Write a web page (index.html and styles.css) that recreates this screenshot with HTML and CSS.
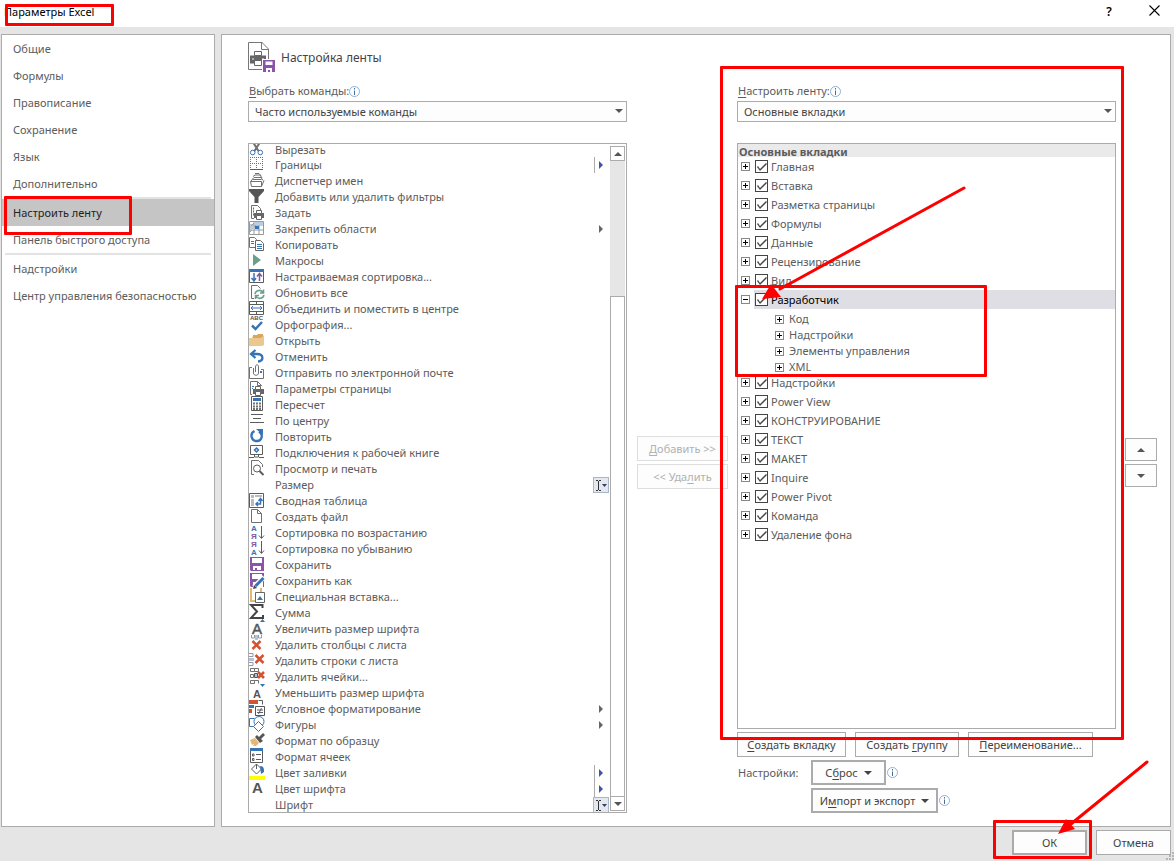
FILE: index.html
```html
<!DOCTYPE html>
<html lang="ru">
<head>
<meta charset="utf-8">
<title>Параметры Excel</title>
<link rel="stylesheet" href="styles.css">
</head>
<body>
<header class="titlebar">
  <h1 class="title">Параметры Excel<span class="mark mark-title"></span></h1>
  <button class="winbtn" type="button" aria-label="Справка">?</button>
  <button class="winbtn" type="button" aria-label="Закрыть"><svg width="11" height="11" viewBox="0 0 11 11"><path d="M.5 .5l10 10M10.5 .5l-10 10" stroke="#000" stroke-width="1.1"/></svg></button>
</header>

<div class="workspace">
  <nav class="sidebar">
    <a href="#">Общие</a>
    <a href="#">Формулы</a>
    <a href="#">Правописание</a>
    <a href="#">Сохранение</a>
    <a href="#">Язык</a>
    <a href="#">Дополнительно</a>
    <hr>
    <a href="#" class="current">Настроить ленту<span class="mark mark-nav"></span></a>
    <a href="#">Панель быстрого доступа</a>
    <hr>
    <a href="#">Надстройки</a>
    <a href="#">Центр управления безопасностью</a>
  </nav>

  <main class="panel">
    <div class="heading">
      <svg width="28" height="31" viewBox="0 0 28 31" fill="none">
        <path d="M14.500 .5H.5v27h14M14 .5l6.500 6.500V17M13.500 .5v7h7" stroke="#777"/>
        <path d="M2 13.500h16v8H2z" fill="#666"/><path d="M4 17h2M14 17h2" stroke="#fff"/>
        <path d="M6.500 9.500h7v4h-7zM6.500 18.500h7v5h-7z" fill="#fff" stroke="#666"/>
        <path d="M14 17h14v14H14z" fill="#fff"/><path d="M15 18h12v12H15z" fill="#8a55a8"/><path d="M17.500 19.500h7v3.500h-7zM18 26h6v4h-6z" fill="#fff"/><path d="M20 28h2v2h-2z" fill="#8a55a8"/>
      </svg>
      <h2>Настройка ленты</h2>
    </div>

    <div class="columns">
      <section class="column">
        <div class="caption"><label for="from"><u>В</u>ыбрать команды:</label><svg class="info" viewBox="0 0 11 11"><circle cx="5.500" cy="5.500" r="5"/><path d="M5 2h1v1.500H5zM5 4.500h1V9H5z"/></svg></div>
        <div class="combo"><select id="from"><option>Часто используемые команды</option></select></div>
        <div class="listbox">
          <ul class="commands">
            <li><svg class="ico"><path class="g" d="M4.500 2l5 8M10.500 2l-5 8" stroke-width="2"/><circle class="b" cx="3.700" cy="11.500" r="2.300"/><circle class="b" cx="11.300" cy="11.500" r="2.300"/></svg>Вырезать</li>
            <li><svg class="ico"><path class="g" stroke-dasharray="1 1" d="M1 .5h14M1 6.500h14M1.500 0v13M7.500 0v13M13.500 0v13"/><path class="d" d="M1 12.500h13"/></svg>Границы<span class="fly split"></span></li>
            <li><svg class="ico"><path class="g" d="M1.500 8.500h11v5H2.500zM12.500 13.500l2.500-6M3 6.500l2-2h7l2 3M4 3.500l2-1.500h5l2 3M6 .5h4l2 2M1.500 8.500l2-2h9"/></svg>Диспетчер имен</li>
            <li><svg class="ico"><path fill="#555" d="M0 0h15v2L9.500 8v6h-4V8L0 2z"/></svg>Добавить или удалить фильтры</li>
            <li><svg class="ico"><path class="g" d="M5 13.500H2.500V.5h6l3 3v2"/><path class="b" d="M4.500 2.500v8" stroke-dasharray="2 1"/><path fill="#666" d="M5 8h10v5H5z"/><path d="M7.500 5.500h5v3h-5zM7.500 10.500h5v4h-5z" fill="#fff" stroke="#666"/></svg>Задать</li>
            <li><svg class="ico"><path class="l" d="M.5 .5h14v13H.5zM.5 4h14M.5 9h14M5 .5v13M10 .5v13M0 7l7-7M0 12L10 1"/><path fill="#b9cde5" d="M1 5h4v4H1zM5 1h9v3H5z"/><path fill="#3674b5" d="M6 5h4v3H6z"/></svg>Закрепить области<span class="fly plain"></span></li>
            <li><svg class="ico"><path fill="#fff" stroke="#707070" d="M.5 .5h5l2 2v8h-7z"/><path d="M6.500 3.500h5l3 3v7h-8z" fill="#fff" stroke="#666"/><path class="b" d="M2 4.500h3M2 6.500h3M8 7.500h5M8 9.500h5M8 11.500h5"/></svg>Копировать</li>
            <li><svg class="ico"><path fill="#6b9f8b" d="M4 1L12 7l-8 6z"/></svg>Макросы</li>
            <li><svg class="ico"><path class="d" d="M.5 .5h14v13H.5z"/><path fill="#3674b5" d="M0 0h15v3H0z"/><path class="b" stroke-width="1.500" d="M5 4v8M2.500 9L5 12l2-3"/><path stroke="#7e57a5" stroke-width="1.500" fill="none" d="M10.500 12V4.500M8 7.500l2.500-3 2.500 3"/></svg>Настраиваемая сортировка...</li>
            <li><svg class="ico"><path class="g" d="M5 13.500H2.500V.5h6l3 3"/><path fill="none" stroke="#6b9f8b" stroke-width="1.600" d="M6 9c.5-4 6-5 8-1.500M14.500 4.500v3.500h-3.500M15 10c-1 4-6.500 4.500-8 1M6.500 14v-3.500H10"/></svg>Обновить все</li>
            <li><svg class="ico"><path class="d" d="M.5 .5h14v13H.5zM.5 3.500h14M.5 10.500h14M7.500 .5v3M7.500 10.500v3"/><path class="b" d="M2 7h11M4 5L2 7l2 2M11 5l2 2-2 2"/></svg>Объединить и поместить в центре</li>
            <li><svg class="ico"><text x="1" y="3" class="tiny">ABC</text><path class="b" stroke-width="2.500" d="M3 8.500L6.500 12 13 5"/></svg>Орфография...</li>
            <li><svg class="ico"><path fill="#d9a75c" d="M4 2h4l1-1h5v11H2z"/><path fill="#ebc88d" d="M0 5h12l3-3v10l-2 1H0z"/></svg>Открыть</li>
            <li><svg class="ico"><path class="b" stroke-width="2.300" d="M6.500 1L2 5l4.500 4M2 5h6c7 0 7 7 1 7.500"/></svg>Отменить</li>
            <li><svg class="ico"><path class="g" d="M3 2.500H.5v11h14v-9H12"/><path class="g" d="M4.500 3v5c0 3 5 3 5 0V2c0-3-3-3-3 0v5"/><path fill="#3674b5" d="M11 6h2v2h-2z"/></svg>Отправить по электронной почте</li>
            <li><svg class="ico"><path class="g" d="M3 13.500H1.500V.5h7l4 4M8.500 .5v4h4"/><path fill="#666" d="M4 8h11v5H4z"/><path d="M6.500 5.500h5v3h-5zM6.500 10.500h5v4h-5z" fill="#fff" stroke="#666"/><path class="b" d="M3 5.500h2M3 7.500h1"/></svg>Параметры страницы</li>
            <li><svg class="ico"><path class="d" d="M2.500 -.5h11v14h-11z"/><path fill="#3674b5" d="M4 1h8v3H4z"/><path class="g" stroke-width="2" stroke-dasharray="2 1" d="M4 6.500h8M4 9.500h8M4 12h8"/></svg>Пересчет</li>
            <li><svg class="ico"><path class="d" d="M2 1.500h12M4 5.500h8M1 9.500h14"/></svg>По центру</li>
            <li><svg class="ico"><path class="b" stroke-width="2.300" d="M10 2.500c5 3.500 2.500 9.500-2 9.500-6 0-7.500-7.500-2.500-10"/><path fill="#3674b5" d="M7 0h7v6z"/></svg>Повторить</li>
            <li><svg class="ico"><path class="d" d="M1.500 .5h12v9h-12zM0 12.500h5M10 12.500h5M5.500 10v2h4v-2"/><path class="b" stroke-width="1.500" d="M7.500 3l2 2-2 2-2-2z"/></svg>Подключения к рабочей книге</li>
            <li><svg class="ico"><path class="g" d="M5 13.500H2.500V-.5h7l4 4V6"/><circle class="d" cx="8" cy="7.500" r="3.500"/><path class="d" stroke-width="2" d="M10.500 10l4 4"/></svg>Просмотр и печать</li>
            <li><svg class="ico"></svg>Размер<span class="sizer"><svg width="14" height="14"><path d="M2 2.500h2M5 2.500h2M4.500 3v9M2 12.500h2M5 12.500h2" stroke="#333" fill="none"/><path d="M8 6h5l-2.500 3z" fill="#33415f"/></svg></span></li>
            <li><svg class="ico"><path class="d" d="M.5 .5h14v14H.5z"/><path fill="#bbb" d="M2 2h3v3H2zM6 2h7v2H6zM2 6h3v7H2z"/><path class="b" stroke-width="1.500" d="M7 11h4.500V6M9.500 8l2-2.500 2 2.500M9 9l-2 2 2 2"/></svg>Сводная таблица</li>
            <li><svg class="ico"><path class="g" d="M2.500 .5h6l4 4v9h-10zM8.500 .5v4h4"/></svg>Создать файл</li>
            <li><svg class="ico"><text x="2" y="6" class="az blue">А</text><text x="2" y="14" class="az violet">Я</text><path class="d" d="M12.500 1v12M10 10.500l2.500 3 2.500-3"/></svg>Сортировка по возрастанию</li>
            <li><svg class="ico"><text x="2" y="6" class="az violet">Я</text><text x="2" y="14" class="az blue">А</text><path class="d" d="M12.500 0v12M10 9.500l2.500 3 2.500-3"/></svg>Сортировка по убыванию</li>
            <li><svg class="ico"><path fill="#8a55a8" d="M1 0h14v14H2l-1-1z"/><path fill="#fff" d="M3 1h10v5H3zM4 9h8v4H4z"/><path fill="#8a55a8" d="M6 11h2v2H6z"/></svg>Сохранить</li>
            <li><svg class="ico"><path fill="#8a55a8" d="M1 0h14v14H2l-1-1z"/><path fill="#fff" d="M3 1h10v5H3zM4 9h10v5H4z"/><path stroke="#fff" stroke-width="5" d="M5 14L15 4"/><path stroke="#3674b5" stroke-width="3" d="M6.500 13l8-8"/><path fill="#444" d="M4 16l1-4 3 3z"/></svg>Сохранить как</li>
            <li><svg class="ico"><path fill="none" stroke="#e3b877" stroke-width="2" d="M2 -1v13h4M12-1v4"/><path d="M6.500 3.500h9v10h-9z" fill="#fff" stroke="#666"/><path fill="#3674b5" d="M8 11l3-4 3 4z"/></svg>Специальная вставка...</li>
            <li><svg class="ico"><path fill="none" stroke="#444" stroke-width="2" d="M13.500 3V0H2l6 6.500L2 13h12v-3"/></svg>Сумма</li>
            <li><svg class="ico"><text x="3" y="13" class="big thick">A</text><path fill="#3674b5" d="M11 1l2.500-3L16 1z"/></svg>Увеличить размер шрифта</li>
            <li><svg class="ico"><path class="l" d="M2.500-2v3h3v-3M12.500-2v3h-3v-3"/><path fill="#aac5e2" d="M6-2h3v5H6z"/><path class="r" d="M3.500 4l8 8M11.500 4l-8 8"/></svg>Удалить столбцы с листа</li>
            <li><svg class="ico"><path class="l" d="M0 .5h4v3H0M0 12.500h4v-3H0"/><path fill="#aac5e2" d="M0 5h5v3H0z"/><path class="r" d="M6.500 2l8 8M14.500 2l-8 8"/></svg>Удалить строки с листа</li>
            <li><svg class="ico"><path class="g" d="M1.500-.5h4v3h-4zM5.500-.5h4v3h-4M1.500 11.500h4v3h-4zM5.500 11.500h4v3M1.500 5.500h3v3h-3z"/><path d="M5.500 4.500h3v4h-3z" fill="#aac5e2" stroke="#555"/><path class="r" stroke-width="1.600" d="M9 3l6 6M15 3l-6 6"/></svg>Удалить ячейки...</li>
            <li><svg class="ico"><text x="4" y="13" class="mid">A</text><path fill="#3674b5" d="M11-1h5l-2.500 3z"/></svg>Уменьшить размер шрифта</li>
            <li><svg class="ico"><path fill="#d35230" d="M0-1h9v4H0z"/><path fill="#3674b5" d="M0 4h5v3H0z"/><path fill="#d35230" d="M0 8h3v4H0z"/><path class="d" d="M9.500-.5h4v4"/><path d="M6.500 5.500h9v9h-9z" fill="#fff" stroke="#555"/><path class="d" d="M8 9h6M8 11.500h6M12.500 7l-3 6"/></svg>Условное форматирование<span class="fly plain"></span></li>
            <li><svg class="ico"><path class="b" d="M4.500 9.500h-4v-8h5"/><circle class="b" cx="10" cy="4.500" r="5"/><path d="M9.500 4.500l5 5-5 5-5-5z" fill="#fff" stroke="#3674b5"/></svg>Фигуры<span class="fly plain"></span></li>
            <li><svg class="ico"><path fill="#e3b877" d="M1 7l5-2 4 5-3 3H4l1-2-2 1z"/><path fill="#555" d="M6 4l2-2 2 2 4-4 2 2-4 4 2 2-3 2z"/></svg>Формат по образцу</li>
            <li><svg class="ico"><path class="d" d="M1.500 0h12v13.500h-12z"/><path fill="#3674b5" d="M1-1h13v3H1z"/><path class="d" d="M7 5.500h5M7 10.500h5M3.500 5h1.500v2H3.500zM3.500 9.500h1.500v2H3.500z"/></svg>Формат ячеек</li>
            <li><svg class="ico"><path class="d" d="M7.500-1l5 5-5 5-5-5zM7.500 4v-5"/><path fill="#3674b5" d="M11 1c4 0 4 3 4 6l-3 2z"/><path fill="#ff0" d="M0 11h16v4H0z"/></svg>Цвет заливки<span class="fly split"></span></li>
            <li><svg class="ico"><text x="3" y="12" class="big bold">A</text></svg>Цвет шрифта<span class="fly split"></span></li>
            <li><svg class="ico"></svg>Шрифт<span class="sizer"><svg width="14" height="14"><path d="M2 2.500h2M5 2.500h2M4.500 3v9M2 12.500h2M5 12.500h2" stroke="#333" fill="none"/><path d="M8 6h5l-2.500 3z" fill="#33415f"/></svg></span></li>
          </ul>
          <div class="scrollbar">
            <button type="button" class="up" aria-label="Вверх"></button>
            <div class="track"></div>
            <div class="thumb"></div>
            <button type="button" class="down" aria-label="Вниз"></button>
          </div>
        </div>
      </section>

      <div class="transfer">
        <button class="btn" type="button" disabled><u>Д</u>обавить &gt;&gt;</button>
        <button class="btn" type="button" disabled>&lt;&lt; Уда<u>л</u>ить</button>
      </div>

      <section class="column ribbon">
        <div class="caption"><label for="to"><u>Н</u>астроить ленту:</label><svg class="info" viewBox="0 0 11 11"><circle cx="5.500" cy="5.500" r="5"/><path d="M5 2h1v1.500H5zM5 4.500h1V9H5z"/></svg></div>
        <div class="combo"><select id="to"><option>Основные вкладки</option></select></div>
        <div class="treebox">
          <h3>Основные вкладки</h3>
          <ul class="tree">
            <li><button class="exp" type="button" aria-label="Развернуть"></button><label><input type="checkbox" checked>Главная</label></li>
            <li><button class="exp" type="button" aria-label="Развернуть"></button><label><input type="checkbox" checked>Вставка</label></li>
            <li><button class="exp" type="button" aria-label="Развернуть"></button><label><input type="checkbox" checked>Разметка страницы</label></li>
            <li><button class="exp" type="button" aria-label="Развернуть"></button><label><input type="checkbox" checked>Формулы</label></li>
            <li><button class="exp" type="button" aria-label="Развернуть"></button><label><input type="checkbox" checked>Данные</label></li>
            <li><button class="exp" type="button" aria-label="Развернуть"></button><label><input type="checkbox" checked>Рецензирование</label></li>
            <li><button class="exp" type="button" aria-label="Развернуть"></button><label><input type="checkbox" checked>Вид</label></li>
            <li class="selected"><button class="exp open" type="button" aria-label="Свернуть"></button><label><input type="checkbox" checked>Разработчик</label>
              <span class="mark mark-tree"></span>
              <svg class="arrow arrow-tree" width="212" height="120" viewBox="0 0 212 120"><path d="M208 4L24 105" /><polygon points="6,115 15,100 25,113"/></svg></li>
            <li class="group">
              <ul>
                <li><button class="exp" type="button" aria-label="Развернуть"></button>Код</li>
                <li><button class="exp" type="button" aria-label="Развернуть"></button>Надстройки</li>
                <li><button class="exp" type="button" aria-label="Развернуть"></button>Элементы управления</li>
                <li><button class="exp" type="button" aria-label="Развернуть"></button>XML</li>
              </ul>
            </li>
            <li><button class="exp" type="button" aria-label="Развернуть"></button><label><input type="checkbox" checked>Надстройки</label></li>
            <li><button class="exp" type="button" aria-label="Развернуть"></button><label><input type="checkbox" checked>Power View</label></li>
            <li><button class="exp" type="button" aria-label="Развернуть"></button><label><input type="checkbox" checked>КОНСТРУИРОВАНИЕ</label></li>
            <li><button class="exp" type="button" aria-label="Развернуть"></button><label><input type="checkbox" checked>ТЕКСТ</label></li>
            <li><button class="exp" type="button" aria-label="Развернуть"></button><label><input type="checkbox" checked>МАКЕТ</label></li>
            <li><button class="exp" type="button" aria-label="Развернуть"></button><label><input type="checkbox" checked>Inquire</label></li>
            <li><button class="exp" type="button" aria-label="Развернуть"></button><label><input type="checkbox" checked>Power Pivot</label></li>
            <li><button class="exp" type="button" aria-label="Развернуть"></button><label><input type="checkbox" checked>Команда</label></li>
            <li><button class="exp" type="button" aria-label="Развернуть"></button><label><input type="checkbox" checked>Удаление фона</label></li>
          </ul>
        </div>
        <div class="actions">
          <button class="btn tab" type="button"><u>С</u>оздать вкладку</button>
          <button class="btn grp" type="button">Создать <u>г</u>руппу</button>
          <button class="btn ren" type="button"><u>П</u>ереименование...</button>
        </div>
        <div class="settings">
          <span class="settings-label">Настройки:</span>
          <div class="settings-row"><button class="btn menu reset" type="button"><span>С<u>б</u>рос</span></button><svg class="info" viewBox="0 0 11 11"><circle cx="5.500" cy="5.500" r="5"/><path d="M5 2h1v1.500H5zM5 4.500h1V9H5z"/></svg></div>
          <div class="settings-row second"><button class="btn menu export" type="button"><span>И<u>м</u>порт и экспорт</span></button><svg class="info" viewBox="0 0 11 11"><circle cx="5.500" cy="5.500" r="5"/><path d="M5 2h1v1.500H5zM5 4.500h1V9H5z"/></svg></div>
        </div>
        <span class="mark mark-ribbon"></span>
      </section>

      <div class="order">
        <button class="btn up" type="button" aria-label="Вверх"></button>
        <button class="btn down" type="button" aria-label="Вниз"></button>
      </div>
    </div>
  </main>
</div>

<footer class="footer">
  <div class="ok-wrap">
    <button class="btn ok" type="button">ОК</button>
    <span class="mark mark-ok"></span>
    <svg class="arrow arrow-ok" width="100" height="84" viewBox="0 0 100 84"><path d="M94 5L18 67"/><polygon points="5,77 13,62 22,72"/></svg>
  </div>
  <button class="btn cancel" type="button">Отмена</button>
  <svg class="grip" width="8" height="8"><path fill="#b5b5b5" d="M6 0h2v2H6zM6 3h2v2H6zM3 3h2v2H3zM6 6h2v2H6zM3 6h2v2H3zM0 6h2v2H0z"/></svg>
</footer>
</body>
</html>
```
FILE: styles.css
```css
* { box-sizing: border-box; }
body {
  margin: 0;
  min-height: 100vh;
  display: flex;
  flex-direction: column;
  background: #e5e5e5;
  color: #5c5c5c;
  font: 11px/16px "Noto Sans", "Open Sans", sans-serif;
  overflow: hidden;
}
ul { list-style: none; margin: 0; padding: 0; }
h1, h2, h3 { margin: 0; font-weight: 400; }
button, select, input { font: inherit; margin: 0; }
u { text-underline-offset: 2px; }

.titlebar { display: flex; align-items: center; height: 27px; padding: 0 8px 4px 4px; background: #fff; color: #000; }
.title { position: relative; flex: 1; font-size: 11px; }
.winbtn { width: 24px; height: 20px; padding: 0; border: 0; background: none; color: #000; font-size: 12px; font-weight: 600; }
.winbtn + .winbtn { margin-left: 21px; }

.workspace { flex: 1; display: flex; gap: 6px; padding: 7px 3px 0 1px; }
.sidebar { width: 214px; border: 1px solid #ababab; background: #fff; }
.sidebar a { position: relative; display: block; height: 27px; padding-left: 11px; line-height: 27px; color: #5c5c5c; text-decoration: none; white-space: nowrap; }
.sidebar .current { background: #c5c5c5; color: #222; }
.sidebar hr { height: 2px; margin: 0 3px; border: 0; background: #e3e3e3; }

.panel { flex: 1; display: flex; flex-direction: column; padding: 7px 13px 13px 26px; border: 1px solid #ababab; background: #fff; }
.heading { display: flex; align-items: center; gap: 5px; height: 31px; margin-bottom: 8px; }
.heading h2 { font-size: 12px; color: #444; }
.columns { flex: 1; display: grid; grid-template-columns: minmax(0, 1fr) 92px minmax(0, 1fr) 32px; gap: 9px; }
.column { position: relative; display: flex; flex-direction: column; }
.caption { display: flex; align-items: center; height: 20px; padding-left: 1px; }
.info { width: 11px; height: 11px; overflow: visible; }
.info circle { fill: none; stroke: #8fb0dc; }
.info path { fill: #41719c; }

.combo { position: relative; height: 21px; margin-bottom: 21px; }
.combo select { display: block; width: 100%; height: 21px; padding: 0 6px; border: 1px solid #ababab; border-radius: 0; background: #fdfdfd; color: #444; appearance: none; }
.combo::after { content: ""; position: absolute; right: 4px; top: 8px; border: 4px solid transparent; border-top-color: #555; border-bottom: 0; }

.listbox { flex: 1; display: flex; border: 1px solid #ababab; overflow: hidden; }
.commands { flex: 1; margin-bottom: -1px; }
.commands li { display: flex; align-items: center; height: 16px; white-space: nowrap; }
.commands li:first-child { align-items: flex-start; height: 13px; line-height: 11px; }
.commands li:first-child .ico { margin-top: -3px; }
.ico { width: 16px; height: 16px; margin-right: 10px; overflow: visible; }
.ico .d { fill: none; stroke: #5c5c5c; }
.ico .g { fill: none; stroke: #707070; }
.ico .l { fill: none; stroke: #999; }
.ico .b { fill: none; stroke: #3674b5; }
.ico .r { fill: none; stroke: #d35230; stroke-width: 2.5; }
.ico text { fill: #555; font-family: "Liberation Sans", sans-serif; }
.ico .tiny { font-size: 6px; font-weight: 700; }
.ico .az { font-size: 8px; font-weight: 700; }
.ico .blue { fill: #3674b5; }
.ico .violet { fill: #7e57a5; }
.ico .mid { font-size: 11px; font-weight: 700; }
.ico .big { font-size: 15px; }
.ico .thick { stroke: #555; stroke-width: .5; }
.ico .bold { font-weight: 700; }
.fly { display: flex; align-items: center; width: 16px; height: 16px; margin-left: auto; padding-left: 4px; border-left: 1px solid transparent; }
.fly::after { content: ""; border: 4px solid transparent; border-left-color: #666; border-right: 0; }
.split { border-left-color: #ababab; }
.split::after { border-left-color: #3f55a5; }
.sizer { width: 16px; height: 16px; margin-left: auto; margin-right: 1px; border: 1px solid #a8b6c8; background: #e3e8f1; }
.sizer svg { display: block; }
.scrollbar { display: flex; flex-direction: column; width: 15px; margin: 2px 1px 1px 0; }
.scrollbar button { position: relative; height: 15px; padding: 0; border: 1px solid #ababab; background: #fff; }
.track { height: 135px; background: #e6e6e6; }
.thumb { flex: 1; border: 1px solid #ababab; border-bottom: 0; background: #fff; }

.up, .down { display: flex; align-items: center; justify-content: center; }
.up::after, .down::after { content: ""; border: 4px solid transparent; }
.up::after { border-bottom-color: #555; border-top: 0; }
.down::after { border-top-color: #555; border-bottom: 0; }

.btn { height: 25px; padding: 0; border: 1px solid #ababab; background: #fdfdfd; color: #444; white-space: nowrap; }
.btn:disabled { border-color: #dedede; color: #b1b1b1; }
.transfer { display: flex; flex-direction: column; gap: 3px; padding: 355px 0 0 1px; }
.order { display: flex; flex-direction: column; gap: 3px; padding-top: 357px; }
.order .btn { height: 23px; }

.treebox { flex: 1; border: 1px solid #ababab; }
.treebox h3 { height: 13px; padding-left: 1px; background: #eaeaea; font-size: 11px; font-weight: 700; line-height: 16px; }
.tree > li { position: relative; display: flex; align-items: center; height: 19px; padding-left: 3px; }
.tree label { display: flex; align-items: center; flex: 1; height: 19px; margin-left: 4px; padding-left: 1px; }
.tree .selected label { background: #dfdee4; color: #000; }
.tree input { display: block; width: 13px; height: 13px; margin-right: 3px; border: 1px solid #444; background: #fff; appearance: none; }
.tree input:checked::before { content: ""; display: block; width: 11px; height: 11px; background: #444; clip-path: polygon(1px 6px, 2px 5px, 4px 8px, 10px 2px, 11px 3px, 4px 10px); }
.exp { flex: none; width: 9px; height: 9px; padding: 0; border: 1px solid #888; background: linear-gradient(#000, #000) center / 5px 1px no-repeat, linear-gradient(#000, #000) center / 1px 5px no-repeat, #fff; }
.exp.open { background: linear-gradient(#000, #000) center / 5px 1px no-repeat, #fff; }
.tree > .group { display: block; height: 64px; padding: 2px 0 0 37px; }
.group li { display: flex; align-items: center; gap: 5px; height: 16px; }

.actions { display: flex; gap: 9px; margin-top: 3px; }
.tab { width: 109px; }
.grp { width: 104px; }
.ren { width: 125px; }
.settings { display: grid; grid-template-columns: 74px 1fr; gap: 3px 0; margin-top: 3px; }
.settings-label { line-height: 25px; padding-left: 1px; white-space: nowrap; }
.settings-row { display: flex; align-items: center; gap: 1px; }
.second { grid-column: 2; }
.menu { display: flex; align-items: center; justify-content: center; gap: 6px; border-width: 2px; }
.menu::after { content: ""; border: 4px solid transparent; border-top-color: #444; border-bottom: 0; }
.reset { width: 75px; }
.export { width: 127px; }

.footer { position: relative; display: flex; justify-content: flex-end; gap: 9px; height: 34px; padding: 3px 3px 0; }
.ok-wrap { position: relative; }
.ok { width: 75px; border-width: 2px; }
.cancel { width: 75px; }
.grip { position: absolute; right: 0; bottom: 1px; }

.mark { position: absolute; z-index: 2; border: 3px solid #f00; border-radius: 1px; pointer-events: none; }
.mark-title { left: 1px; top: 0; width: 109px; height: 22px; }
.mark-nav { left: 2px; top: -3px; width: 128px; height: 39px; }
.mark-ribbon { inset: -15px -8px 73px -17px; }
.mark-tree { left: -3px; top: -5px; width: 252px; height: 92px; }
.mark-ok { left: -19px; top: -10px; width: 99px; height: 39px; }
.arrow { position: absolute; z-index: 3; pointer-events: none; }
.arrow path { fill: none; stroke: #f00; stroke-width: 3; stroke-linecap: round; }
.arrow polygon { fill: #f00; }
.arrow-tree { left: 18px; top: -106px; }
.arrow-ok { left: 41px; top: -73px; }
```
